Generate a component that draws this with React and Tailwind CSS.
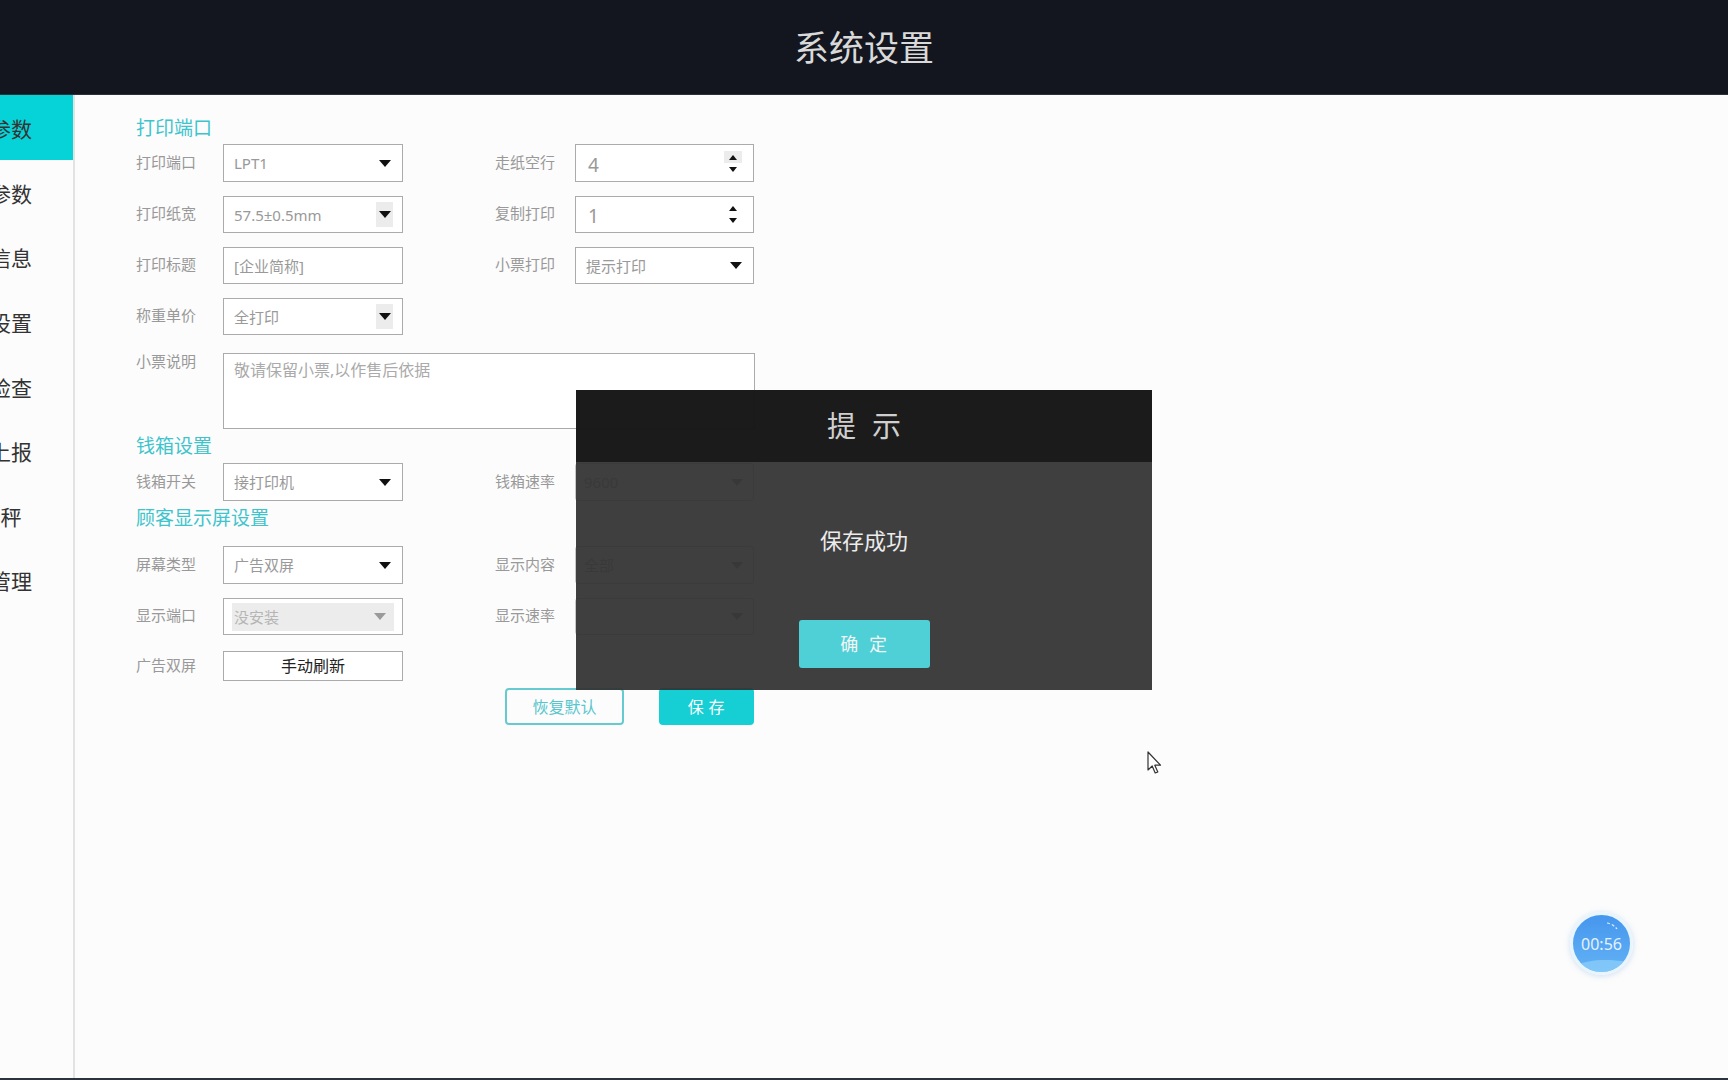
import React from "react";

const Arrow = ({ color = "#111" }) => (
  <svg width="12" height="7" viewBox="0 0 12 7">
    <path d="M0 0 L12 0 L6 7 Z" fill={color} />
  </svg>
);

const Select = ({ value, arrowBg, disabled, w = "w-[180px]" }) => (
  <div className={`${w} h-full border border-[#ababab] bg-white flex items-center relative`}>
    {disabled ? (
      <div className="mx-[8px] my-[4px] flex-1 h-[28px] bg-[#ececec] flex items-center pl-[2px] pr-[8px] justify-between">
        <span className="text-[15px] text-[#b5b5b5] leading-[20px]">{value}</span>
        <Arrow color="#9a9a9a" />
      </div>
    ) : (
      <>
        <span className="pl-[10px] flex-1 text-[15px] text-[#999] leading-[20px]">{value}</span>
        <div className={`mr-[9px] w-[17px] h-[25px] flex items-center justify-center ${arrowBg ? "bg-[#ececec]" : ""}`}>
          <Arrow />
        </div>
      </>
    )}
  </div>
);

const NumberInput = ({ value, hover }) => (
  <div className="w-[179px] h-full border border-[#ababab] bg-white flex items-center">
    <span className="pl-[12px] pt-[3px] flex-1 text-[19px] text-[#999] leading-[24px]">{value}</span>
    <div className="mr-[11px] w-[18px] h-[24px] flex flex-col">
      <div className={`h-[12px] flex items-center justify-center ${hover ? "bg-[#ececec]" : ""}`}>
        <svg width="8" height="5" viewBox="0 0 8 5"><path d="M0 5 L8 5 L4 0 Z" fill="#111" /></svg>
      </div>
      <div className="h-[12px] flex items-center justify-center">
        <svg width="8" height="5" viewBox="0 0 8 5"><path d="M0 0 L8 0 L4 5 Z" fill="#111" /></svg>
      </div>
    </div>
  </div>
);

const Faded = ({ value }) => (
  <div className="w-[179px] h-full border border-[#c8c8c8] rounded-[3px] bg-[#f7f7f7] flex items-center">
    <span className="pl-[8px] flex-1 text-[15px] text-[#aaa] leading-[20px]">{value}</span>
    <div className="mr-[10px]"><Arrow color="#999" /></div>
  </div>
);

const Label = ({ children }) => (
  <div className="w-[87px] text-[15px] text-[#999] leading-[20px] shrink-0 mt-[-3px]">{children}</div>
);
const RLabel = ({ children }) => (
  <div className="w-[172px] pr-[20px] text-right text-[15px] text-[#999] leading-[20px] shrink-0 mt-[-3px]">{children}</div>
);

const Heading = ({ children, cls = "" }) => (
  <div className={`h-[24px] leading-[24px] text-[19px] text-[#3fc4cc] ${cls}`}>{children}</div>
);

const sideItems = ["基础参数", "打印参数", "门店信息", "其他设置", "网络检查", "数据上报", "电子秤", "会员管理"];

export default function App() {
  return (
    <div className="w-[1728px] h-[1080px] relative overflow-hidden bg-[#fcfcfc] flex flex-col font-['Noto_Sans','Noto_Sans_CJK_SC',sans-serif]">
      <div className="h-[95px] shrink-0 bg-[#13161f] border-b border-[#2c313c] flex items-center justify-center">
        <span className="text-[35px] leading-[40px] text-[#d9d9d9] mt-[2px]">系统设置</span>
      </div>

      <div className="flex-1 flex min-h-0">
        <div className="w-[75px] shrink-0 border-r-2 border-[#e3e3e3] overflow-hidden bg-[#fcfcfc]">
          {sideItems.map((t, i) => (
            <div key={t} className={`h-[64.6px] flex items-center ${i === 0 ? "bg-[#06d3d7]" : ""}`}>
              <div className="w-[160px] ml-[-90px] shrink-0 text-center text-[21px] leading-[26px] text-[#333] mt-[4px]">{t}</div>
            </div>
          ))}
        </div>

        <div className="flex-1 pl-[61px] pt-[21px] flex flex-col">
          <Heading>打印端口</Heading>
          <div className="mt-[4px] flex flex-col gap-[14px]">
            <div className="flex items-center h-[38px]">
              <Label>打印端口</Label>
              <Select value="LPT1" />
              <RLabel>走纸空行</RLabel>
              <NumberInput value="4" hover />
            </div>
            <div className="flex items-center h-[37px]">
              <Label>打印纸宽</Label>
              <Select value="57.5±0.5mm" arrowBg />
              <RLabel>复制打印</RLabel>
              <NumberInput value="1" />
            </div>
            <div className="flex items-center h-[37px]">
              <Label>打印标题</Label>
              <div className="w-[180px] h-full border border-[#ababab] bg-white flex items-center pl-[10px] text-[15px] text-[#999] leading-[20px]">[企业简称]</div>
              <RLabel>小票打印</RLabel>
              <Select value="提示打印" w="w-[179px]" />
            </div>
            <div className="flex items-center h-[37px]">
              <Label>称重单价</Label>
              <Select value="全打印" arrowBg />
            </div>
          </div>
          <div className="mt-[18px] flex items-start h-[76px]">
            <div className="mt-[1px]"><Label>小票说明</Label></div>
            <div className="w-[532px] h-full border border-[#ababab] bg-white pl-[10px] pt-[5px] text-[16px] leading-[22px] text-[#aaa]">敬请保留小票,以作售后依据</div>
          </div>

          <Heading cls="mt-[5px]">钱箱设置</Heading>
          <div className="mt-[5px] flex items-center h-[38px]">
            <Label>钱箱开关</Label>
            <Select value="接打印机" />
            <RLabel>钱箱速率</RLabel>
            <Faded value="9600" />
          </div>

          <Heading cls="mt-[5px]">顾客显示屏设置</Heading>
          <div className="mt-[16px] flex items-center h-[38px]">
            <Label>屏幕类型</Label>
            <Select value="广告双屏" />
            <RLabel>显示内容</RLabel>
            <Faded value="全部" />
          </div>
          <div className="mt-[14px] flex items-center h-[37px]">
            <Label>显示端口</Label>
            <Select value="没安装" disabled />
            <RLabel>显示速率</RLabel>
            <Faded value="" />
          </div>
          <div className="mt-[16px] flex items-center h-[30px]">
            <Label>广告双屏</Label>
            <div className="w-[180px] h-full border border-[#ababab] bg-white flex items-center justify-center text-[16px] leading-[20px] text-[#222]">手动刷新</div>
          </div>
          <div className="mt-[7px] w-[618px] flex justify-end gap-[35px] h-[37px]">
            <div className="w-[119px] h-full border-2 border-[#66cbd0] rounded-[4px] flex items-center justify-center text-[16px] text-[#56c6cc] leading-[20px]">恢复默认</div>
            <div className="w-[95px] h-full bg-[#16cfd5] rounded-[4px] flex items-center justify-center text-[16px] text-white leading-[20px] tracking-[0.3em] pl-[4px]">保存</div>
          </div>
        </div>
      </div>

      <div className="h-[2px] shrink-0 bg-[#2c323e]" />

      {/* Modal */}
      <div className="absolute left-[576px] top-[390px] w-[576px] h-[300px] flex flex-col">
        <div className="h-[72px] bg-[rgba(20,20,20,0.97)] flex items-center justify-center">
          <span className="text-[29px] leading-[34px] text-[#cfcfcf] tracking-[0.55em] pl-[16px]">提示</span>
        </div>
        <div className="flex-1 bg-[rgba(48,48,48,0.93)] flex flex-col items-center">
          <div className="pt-[64px] text-[22px] leading-[28px] text-[#ececec]">保存成功</div>
          <div className="mt-[66px] w-[131px] h-[48px] bg-[#4fd0d6] rounded-[3px] flex items-center justify-center text-[18px] text-[#f4f4f4] tracking-[0.6em] pl-[10px]">确定</div>
        </div>
      </div>

      {/* Cursor */}
      <div className="absolute left-[1147px] top-[751px]">
        <svg width="15" height="24" viewBox="0 0 15 24">
          <path d="M1 1 L1 19 L5.2 15 L8.2 22 L10.8 21 L7.8 14.2 L13.5 14.2 Z" fill="#fff" stroke="#333" strokeWidth="1.2" strokeLinejoin="round" />
        </svg>
      </div>

      {/* Timer bubble */}
      <div className="absolute left-[1570px] top-[912px] w-[63px] h-[63px] rounded-full border-[3px] border-[#e9f5fd] shadow-[0_1px_6px_rgba(120,170,220,0.35)] overflow-hidden bg-gradient-to-b from-[#4596ee] to-[#63b2f5] flex items-center justify-center">
        <svg className="absolute left-0 bottom-0" width="57" height="18" viewBox="0 0 57 18">
          <path d="M0 12 C 15 6, 30 4, 57 8 L57 18 L0 18 Z" fill="#8fd0fa" opacity="0.7" />
        </svg>
        <svg className="absolute left-[32px] top-[6px]" width="14" height="10" viewBox="0 0 14 10">
          <path d="M2 2 Q 8 3 12 8" stroke="#dbeeff" strokeWidth="1.2" fill="none" strokeDasharray="3 2" />
        </svg>
        <span className="z-10 text-[16px] leading-[20px] text-[#e3f2ff]">00:56</span>
      </div>
    </div>
  );
}
